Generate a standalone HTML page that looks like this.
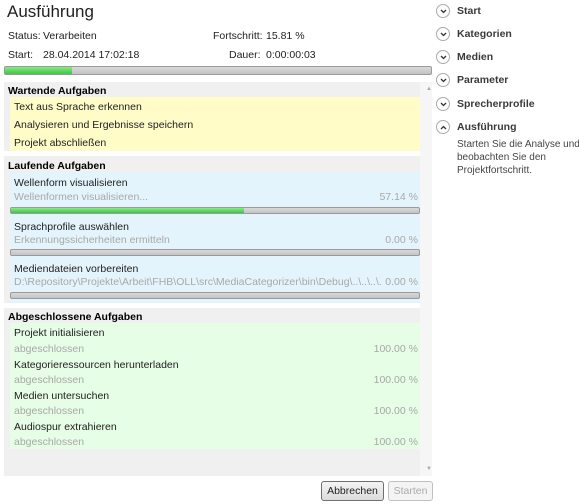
<!DOCTYPE html>
<html><head><meta charset="utf-8"><style>
body{margin:0;width:579px;height:504px;background:#fff;font-family:"Liberation Sans",sans-serif;font-size:10.5px;color:#1e1e1e;position:relative;overflow:hidden}
.a{position:absolute;white-space:nowrap}
.g{color:#a8a8a8}
.r{position:absolute;right:161px;color:#a8a8a8;white-space:nowrap}
.b{font-weight:bold;color:#000}
.bar{position:absolute;height:5px;border:1px solid #9a9a9a;border-radius:2px;background:linear-gradient(#d8d8d8,#c4c4c4)}
.bar i{display:block;height:100%;background:linear-gradient(#8be88b,#3cc83c)}
.circ{position:absolute;left:436px;width:12px;height:12px;border:1px solid #aaa;border-radius:50%}
.circ svg{position:absolute;left:3px;top:4px}
.nav{position:absolute;left:457px;font-weight:bold;color:#3a3a3a;font-size:10.5px}
.btn{position:absolute;height:18px;border:1px solid #707070;border-radius:3px;background:linear-gradient(#f4f4f4,#dcdcdc);text-align:center;line-height:18px;font-size:10.5px}
</style></head><body>
<div class="a" style="left:7px;top:2px;font-size:17px;color:#222">Ausführung</div>
<div class="a" style="left:8px;top:30px">Status:</div>
<div class="a" style="left:43px;top:30px">Verarbeiten</div>
<div class="a" style="left:213px;top:30px">Fortschritt:</div>
<div class="a" style="left:266px;top:30px">15.81 %</div>
<div class="a" style="left:8px;top:49px">Start:</div>
<div class="a" style="left:43px;top:49px">28.04.2014 17:02:18</div>
<div class="a" style="left:229px;top:49px">Dauer:</div>
<div class="a" style="left:266px;top:49px">0:00:00:03</div>
<div class="bar" style="left:4px;top:66px;width:426px;height:7px"><i style="width:67px"></i></div>

<div class="a" style="left:4px;top:82px;width:416px;height:394px;background:#f0f0f0"></div>
<div class="a" style="left:420px;top:82px;width:12px;height:394px;background:#f6f6f6"></div>
<div class="a" style="left:426px;top:86px;font-size:6px;color:#aaa">▲</div>
<div class="a" style="left:426px;top:466px;font-size:6px;color:#aaa">▼</div>

<div class="a b" style="left:8px;top:85px">Wartende Aufgaben</div>
<div class="a" style="left:10px;top:97px;width:410px;height:54px;background:#fffcc8"></div>
<div class="a" style="left:14px;top:101px">Text aus Sprache erkennen</div>
<div class="a" style="left:14px;top:119px">Analysieren und Ergebnisse speichern</div>
<div class="a" style="left:14px;top:137px">Projekt abschließen</div>
<div class="a" style="left:4px;top:151px;width:416px;height:5px;background:#fff"></div>

<div class="a b" style="left:8px;top:160px">Laufende Aufgaben</div>
<div class="a" style="left:10px;top:172px;width:410px;height:131px;background:#e4f4fc"></div>
<div class="a" style="left:14px;top:177px">Wellenform visualisieren</div>
<div class="a g" style="left:14px;top:191px">Wellenformen visualisieren...</div>
<div class="r" style="top:191px">57.14 %</div>
<div class="bar" style="left:10px;top:207px;width:408px"><i style="width:233px"></i></div>
<div class="a" style="left:14px;top:221px">Sprachprofile auswählen</div>
<div class="a g" style="left:14px;top:234px">Erkennungssicherheiten ermitteln</div>
<div class="r" style="top:234px">0.00 %</div>
<div class="bar" style="left:10px;top:249px;width:408px"></div>
<div class="a" style="left:14px;top:263px">Mediendateien vorbereiten</div>
<div class="a g" style="left:14px;top:276px;width:368px;overflow:hidden">D:\Repository\Projekte\Arbeit\FHB\OLL\src\MediaCategorizer\bin\Debug\..\..\..\..\Media</div>
<div class="r" style="top:276px">0.00 %</div>
<div class="bar" style="left:10px;top:292px;width:408px"></div>
<div class="a" style="left:4px;top:303px;width:416px;height:5px;background:#fff"></div>

<div class="a b" style="left:8px;top:311px">Abgeschlossene Aufgaben</div>
<div class="a" style="left:10px;top:323px;width:410px;height:126px;background:#e6fde6"></div>
<div class="a" style="left:14px;top:327px">Projekt initialisieren</div>
<div class="a g" style="left:14px;top:343px">abgeschlossen</div><div class="r" style="top:343px">100.00 %</div>
<div class="a" style="left:14px;top:359px">Kategorieressourcen herunterladen</div>
<div class="a g" style="left:14px;top:374px">abgeschlossen</div><div class="r" style="top:374px">100.00 %</div>
<div class="a" style="left:14px;top:390px">Medien untersuchen</div>
<div class="a g" style="left:14px;top:405px">abgeschlossen</div><div class="r" style="top:405px">100.00 %</div>
<div class="a" style="left:14px;top:421px">Audiospur extrahieren</div>
<div class="a g" style="left:14px;top:436px">abgeschlossen</div><div class="r" style="top:436px">100.00 %</div>

<div class="btn" style="left:321px;top:481px;width:61px">Abbrechen</div>
<div class="btn" style="left:388px;top:481px;width:43px;border-color:#c0c0c0;background:#f4f4f4;color:#aaa">Starten</div>

<div class="circ" style="top:4px"><svg width="7" height="5"><path d="M1 1L3.5 3.5L6 1" stroke="#333" stroke-width="1.3" fill="none"/></svg></div>
<div class="nav" style="top:5px">Start</div>
<div class="circ" style="top:27px"><svg width="7" height="5"><path d="M1 1L3.5 3.5L6 1" stroke="#333" stroke-width="1.3" fill="none"/></svg></div>
<div class="nav" style="top:28px">Kategorien</div>
<div class="circ" style="top:50px"><svg width="7" height="5"><path d="M1 1L3.5 3.5L6 1" stroke="#333" stroke-width="1.3" fill="none"/></svg></div>
<div class="nav" style="top:51px">Medien</div>
<div class="circ" style="top:73px"><svg width="7" height="5"><path d="M1 1L3.5 3.5L6 1" stroke="#333" stroke-width="1.3" fill="none"/></svg></div>
<div class="nav" style="top:74px">Parameter</div>
<div class="circ" style="top:97px"><svg width="7" height="5"><path d="M1 1L3.5 3.5L6 1" stroke="#333" stroke-width="1.3" fill="none"/></svg></div>
<div class="nav" style="top:98px">Sprecherprofile</div>
<div class="circ" style="top:120px"><svg width="7" height="5"><path d="M1 4L3.5 1.5L6 4" stroke="#333" stroke-width="1.3" fill="none"/></svg></div>
<div class="nav" style="top:121px">Ausführung</div>
<div class="a" style="left:457px;top:138px;color:#444;line-height:13px;font-size:10px">Starten Sie die Analyse und<br>beobachten Sie den<br>Projektfortschritt.</div>
</body></html>
